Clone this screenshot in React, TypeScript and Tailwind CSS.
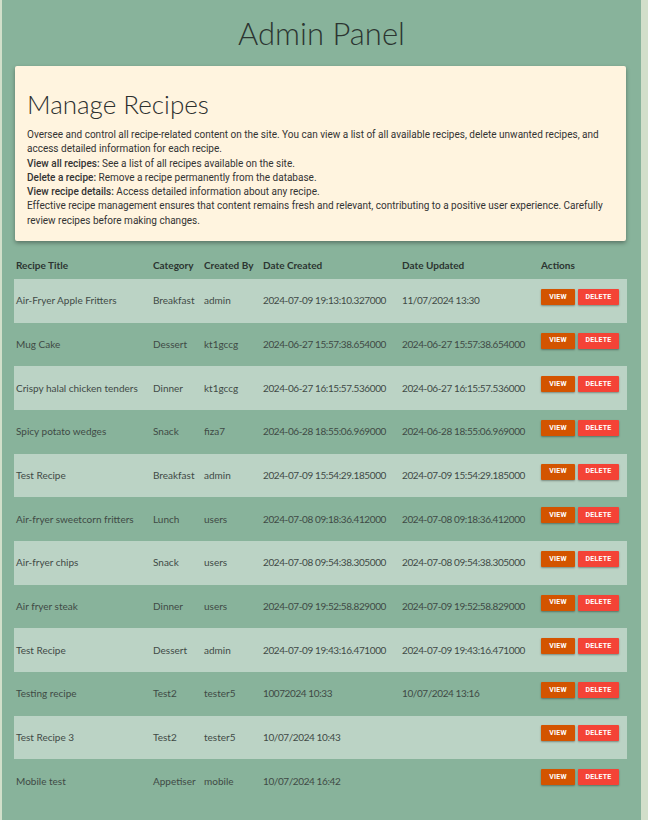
const recipes = [
  { title: 'Air-Fryer Apple Fritters', category: 'Breakfast', by: 'admin', created: '2024-07-09 19:13:10.327000', updated: '11/07/2024 13:30' },
  { title: 'Mug Cake', category: 'Dessert', by: 'kt1gccg', created: '2024-06-27 15:57:38.654000', updated: '2024-06-27 15:57:38.654000' },
  { title: 'Crispy halal chicken tenders', category: 'Dinner', by: 'kt1gccg', created: '2024-06-27 16:15:57.536000', updated: '2024-06-27 16:15:57.536000' },
  { title: 'Spicy potato wedges', category: 'Snack', by: 'fiza7', created: '2024-06-28 18:55:06.969000', updated: '2024-06-28 18:55:06.969000' },
  { title: 'Test Recipe', category: 'Breakfast', by: 'admin', created: '2024-07-09 15:54:29.185000', updated: '2024-07-09 15:54:29.185000' },
  { title: 'Air-fryer sweetcorn fritters', category: 'Lunch', by: 'users', created: '2024-07-08 09:18:36.412000', updated: '2024-07-08 09:18:36.412000' },
  { title: 'Air-fryer chips', category: 'Snack', by: 'users', created: '2024-07-08 09:54:38.305000', updated: '2024-07-08 09:54:38.305000' },
  { title: 'Air fryer steak', category: 'Dinner', by: 'users', created: '2024-07-09 19:52:58.829000', updated: '2024-07-09 19:52:58.829000' },
  { title: 'Test Recipe', category: 'Dessert', by: 'admin', created: '2024-07-09 19:43:16.471000', updated: '2024-07-09 19:43:16.471000' },
  { title: 'Testing recipe', category: 'Test2', by: 'tester5', created: '10072024 10:33', updated: '10/07/2024 13:16' },
  { title: 'Test Recipe 3', category: 'Test2', by: 'tester5', created: '10/07/2024 10:43', updated: '' },
  { title: 'Mobile test', category: 'Appetiser', by: 'mobile', created: '10/07/2024 16:42', updated: '' },
];

export default function App() {
  return (
    <div className="min-h-[820px] bg-[#d2dfca] font-['Lato',sans-serif] text-[#2f3a35]">
      <div className="ml-[2px] min-h-[820px] w-[639px] bg-[#88b39b] px-[13px] pb-4">
        <h1 className="pt-[13px] text-center text-[31px] font-light leading-[40px] text-[#2c3531]">
          Admin Panel
        </h1>

        <section className="mt-[13px] w-[611px] rounded-[2px] bg-[#fff4df] px-[12px] pt-[21px] pb-[13px] shadow-[0_2px_4px_rgba(0,0,0,0.35)]">
          <h2 className="text-[26px] font-light leading-[34px] text-[#2c2f2e]">Manage Recipes</h2>
          <div className="mt-[7px] font-['Roboto',sans-serif] text-[10px] leading-[14.3px] text-[#333]">
            <p>
              Oversee and control all recipe-related content on the site. You can view a list of all available recipes, delete unwanted recipes, and access detailed information for each recipe.
            </p>
            <p>
              <b className="font-medium">View all recipes:</b> See a list of all recipes available on the site.
            </p>
            <p>
              <b className="font-medium">Delete a recipe:</b> Remove a recipe permanently from the database.
            </p>
            <p>
              <b className="font-medium">View recipe details:</b> Access detailed information about any recipe.
            </p>
            <p>
              Effective recipe management ensures that content remains fresh and relevant, contributing to a positive user experience. Carefully review recipes before making changes.
            </p>
          </div>
        </section>

        <table className="mt-[10px] ml-[-1px] w-[613px] table-fixed border-collapse text-left text-[10px]">
          <colgroup>
            <col className="w-[137px]" />
            <col className="w-[51px]" />
            <col className="w-[59px]" />
            <col className="w-[139px]" />
            <col className="w-[139px]" />
            <col className="w-[88px]" />
          </colgroup>
          <thead>
            <tr className="h-[28px] text-[#2c3531]">
              <th className="px-[2px] font-bold">Recipe Title</th>
              <th className="px-[2px] font-bold">Category</th>
              <th className="px-[2px] font-bold">Created By</th>
              <th className="px-[2px] font-bold">Date Created</th>
              <th className="px-[2px] font-bold">Date Updated</th>
              <th className="px-[2px] font-bold">Actions</th>
            </tr>
          </thead>
          <tbody>
            {recipes.map((r, i) => (
              <tr key={i} className={`h-[43.67px] text-[#3f4a45] ${i % 2 === 0 ? 'bg-[#bbd3c5]' : ''}`}>
                <td className="px-[2px]">{r.title}</td>
                <td className="px-[2px] whitespace-nowrap">{r.category}</td>
                <td className="px-[2px]">{r.by}</td>
                <td className="px-[2px] whitespace-nowrap tracking-[-0.4px]">{r.created}</td>
                <td className="px-[2px] whitespace-nowrap tracking-[-0.4px]">{r.updated}</td>
                <td className="px-[2px] pb-[8px]">
                  <div className="flex gap-[3px]">
                    <button className="h-[16px] w-[34px] rounded-[1px] bg-[#d35400] font-['Roboto',sans-serif] text-[7px] font-bold tracking-[0.2px] text-white shadow-[0_1px_2px_rgba(0,0,0,0.35)]">
                      VIEW
                    </button>
                    <button className="h-[16px] w-[41px] rounded-[1px] bg-[#f44336] font-['Roboto',sans-serif] text-[7px] font-bold tracking-[0.2px] text-white shadow-[0_1px_2px_rgba(0,0,0,0.35)]">
                      DELETE
                    </button>
                  </div>
                </td>
              </tr>
            ))}
          </tbody>
        </table>
      </div>
    </div>
  );
}
